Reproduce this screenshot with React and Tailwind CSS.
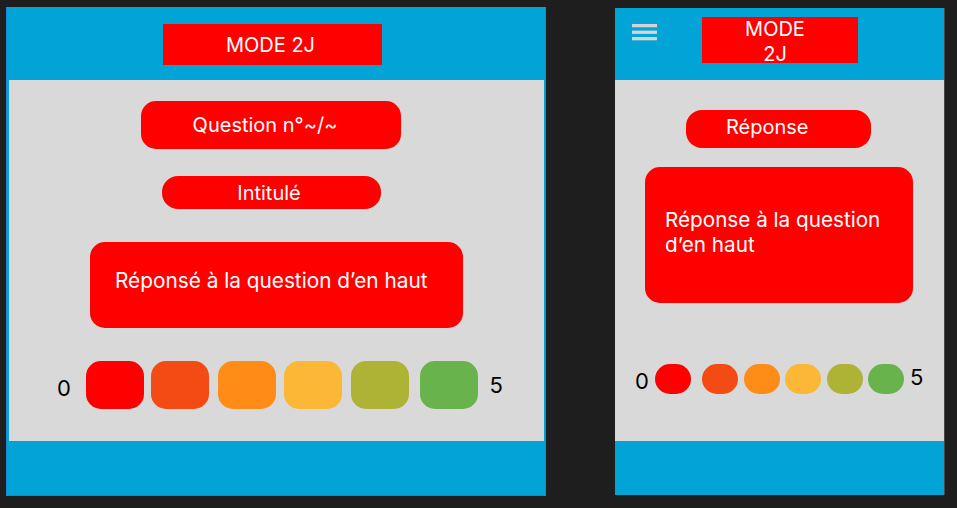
import React from "react";

const colors = ["#ff0000", "#f44b14", "#fe8c17", "#fbb735", "#aeb336", "#69b34c"];

export default function App() {
  return (
    <div
      className="w-[957px] h-[508px] bg-[#1e1e1e] flex items-start pl-[6px] pt-[7px] overflow-hidden"
      style={{ fontFamily: "Inter, 'Noto Sans', sans-serif" }}
    >
      {/* Left frame */}
      <div className="w-[540px] h-[489px] bg-[#02a3d7] border-x border-b border-[#1689dc] flex flex-col">
        <div className="h-[73px] shrink-0 pt-[17px] pl-[156px]">
          <div className="w-[219px] h-[41px] bg-[#ff0000] flex items-center justify-center pr-[4px] text-white text-[20px] leading-none">
            MODE 2J
          </div>
        </div>
        <div className="ml-[2px] mr-[1px] h-[361px] shrink-0 bg-[#d9d9d9] flex flex-col items-start">
          <div className="ml-[132px] mt-[21px] w-[260px] h-[48px] rounded-[15px] bg-[#ff0000] flex items-center justify-center pr-[12px] text-white text-[20px] leading-none">
            Question n°~/~
          </div>
          <div className="ml-[153px] mt-[27px] w-[219px] h-[33px] rounded-[16px] bg-[#ff0000] flex items-center justify-center pr-[5px] text-white text-[20px] leading-none">
            Intitulé
          </div>
          <div className="ml-[81px] mt-[33px] w-[373px] h-[86px] rounded-[15px] bg-[#ff0000] pt-[26px] pl-[25px] text-white text-[20.8px] leading-[25px]">
            Réponsé à la question d’en haut
          </div>
          <div className="ml-[48px] mt-[33px] flex items-center h-[48px]">
            <span className="w-[12px] mr-[17px] mt-[6px] text-[22px] leading-none text-black">0</span>
            {colors.map((c, i) => (
              <div
                key={i}
                className={`w-[58px] h-[48px] rounded-[15px] ${i === 0 ? "" : i === 5 ? "ml-[11px]" : i === 1 ? "ml-[7px]" : "ml-[8.5px]"}`}
                style={{ backgroundColor: c }}
              />
            ))}
            <span className="ml-[12px] text-[22px] leading-none text-black">5</span>
          </div>
        </div>
        <div className="flex-1" />
      </div>

      {/* Right frame */}
      <div className="ml-[69px] mt-[1px] w-[330px] h-[487px] bg-[#02a3d7] border-r border-[#4a4a4a] flex flex-col">
        <div className="h-[72px] shrink-0 pt-[10px] pl-[17px] flex items-start">
          <svg width="25" height="17" viewBox="0 0 25 17" className="mt-[6px]">
            <rect x="0" y="0" width="25" height="3.3" fill="#d4d4d4" />
            <rect x="0" y="6.6" width="25" height="3.3" fill="#d4d4d4" />
            <rect x="0" y="13" width="25" height="3.3" fill="#d4d4d4" />
          </svg>
          <div className="ml-[45px] w-[156px] h-[46px] bg-[#ff0000] text-white text-[20px] leading-[25px] text-center pr-[10px] -mt-[1px]">
            MODE
            <br />
            2J
          </div>
        </div>
        <div className="h-[361px] shrink-0 bg-[#d9d9d9] flex flex-col items-start">
          <div className="ml-[71px] mt-[30px] w-[185px] h-[38px] rounded-[16px] bg-[#ff0000] flex items-center pl-[40px] pb-[4px] text-white text-[20px] leading-none">
            Réponse
          </div>
          <div className="ml-[30px] mt-[19px] w-[268px] h-[136px] rounded-[15px] bg-[#ff0000] pt-[40px] pl-[20px] text-white text-[20.7px] leading-[25px]">
            Réponse à la question
            <br />
            d’en haut
          </div>
          <div className="ml-[20px] mt-[61px] flex items-center h-[30px]">
            <span className="w-[12px] mr-[8px] mt-[4px] text-[22px] leading-none text-black">0</span>
            {colors.map((c, i) => (
              <div
                key={i}
                className={`w-[36px] h-[30px] rounded-[15px] ${i === 0 ? "" : i === 1 ? "ml-[11px]" : "ml-[5.5px]"}`}
                style={{ backgroundColor: c }}
              />
            ))}
            <span className="ml-[6px] -mt-[4px] text-[22px] leading-none text-black">5</span>
          </div>
        </div>
        <div className="flex-1" />
      </div>
    </div>
  );
}
